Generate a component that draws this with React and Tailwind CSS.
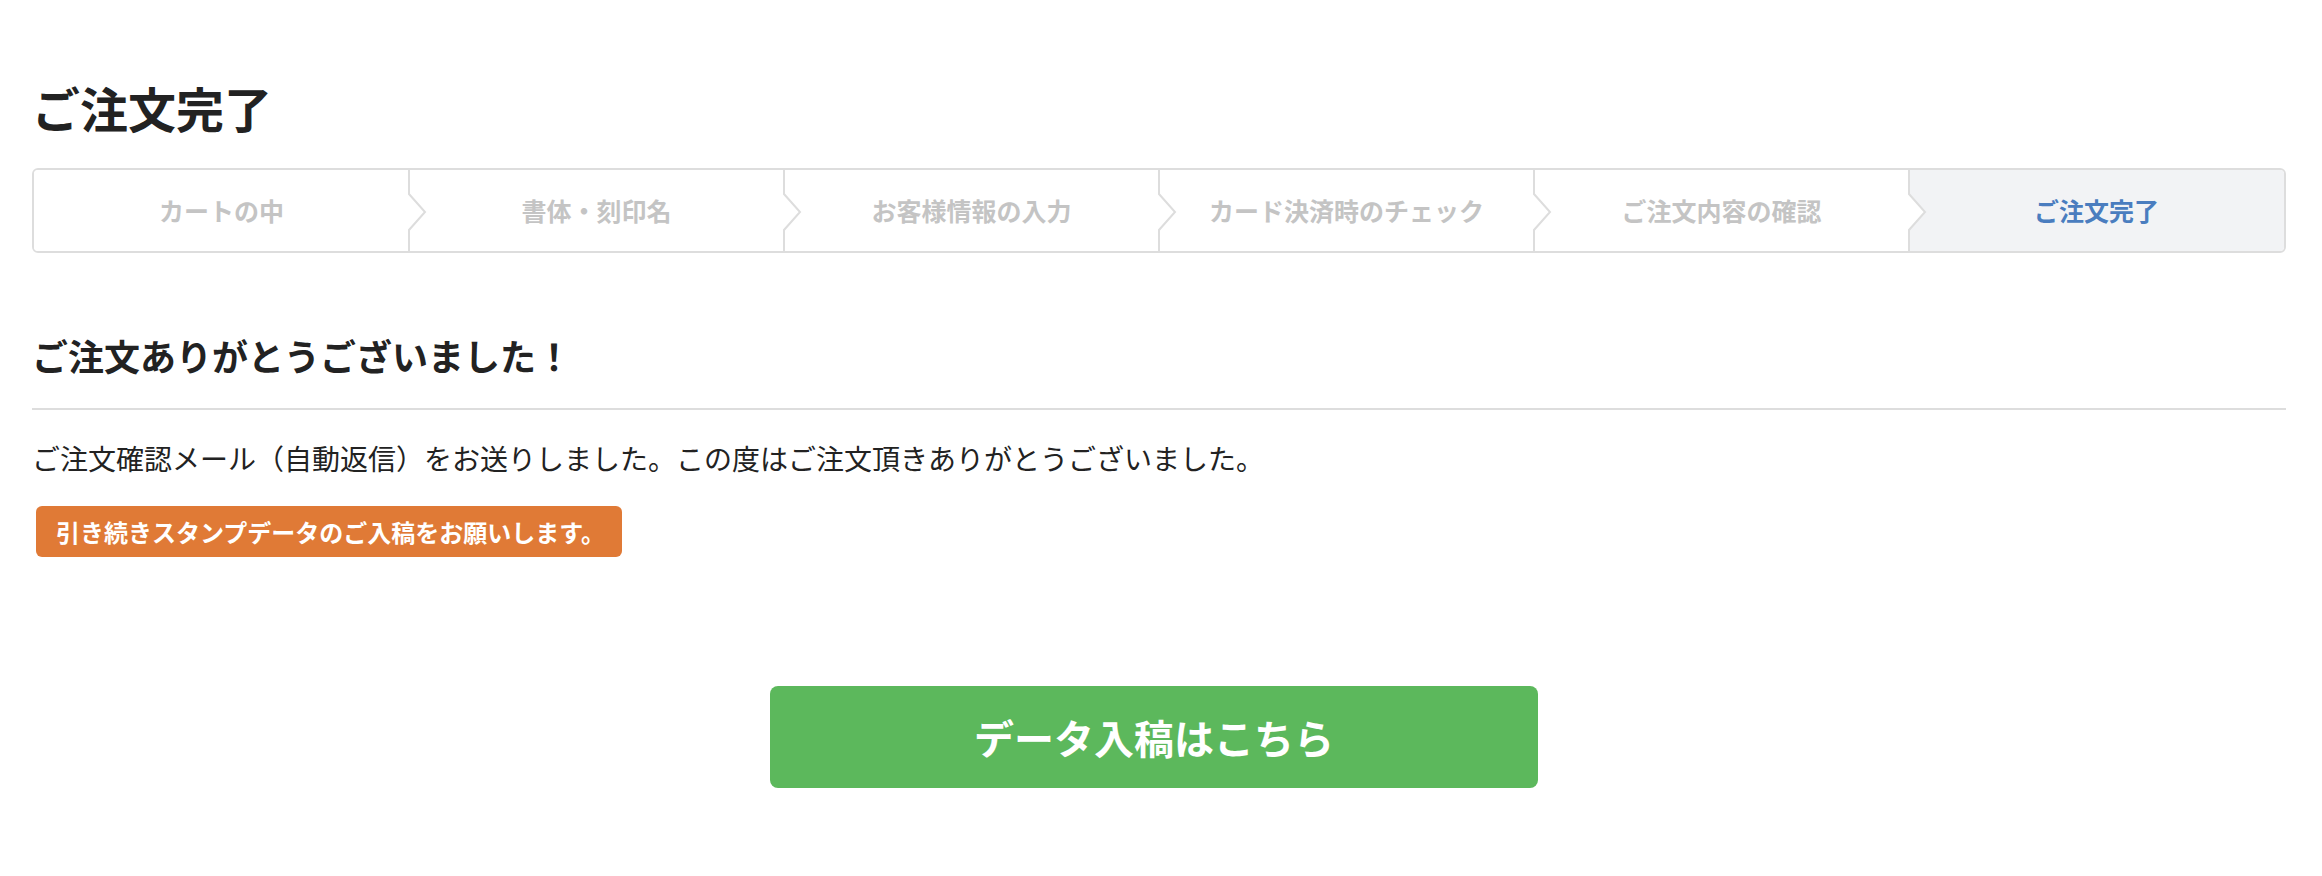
import React from 'react';

// 注文フローのステップ
const steps = [
  'カートの中',
  '書体・刻印名',
  'お客様情報の入力',
  'カード決済時のチェック',
  'ご注文内容の確認',
  'ご注文完了',
];

// ステップ間の山形の区切り線
const Chevron = () => (
  <svg
    className="absolute top-0 right-[-19px] z-10 h-[81px] w-[20px]"
    viewBox="0 0 20 81"
    fill="none"
  >
    <polygon points="1,24 17,42 1,60" fill="#ffffff" />
    <polyline points="1,0 1,24 17,42 1,60 1,81" stroke="#dddddd" strokeWidth="2" fill="none" />
  </svg>
);

const StepBar = ({ current }) => (
  <div className="mt-[33px] flex h-[85px] overflow-hidden rounded-[6px] border-2 border-[#dddddd]">
    {steps.map((label, i) => {
      const active = i === current;
      return (
        <div
          key={label}
          className={`relative flex flex-1 items-center justify-center ${
            active ? 'bg-[#f2f3f5] text-[#4a7dbf]' : 'bg-white text-[#c4c4c4]'
          }`}
        >
          <span className="text-[25px] font-bold leading-none">{label}</span>
          {i < steps.length - 1 && <Chevron />}
        </div>
      );
    })}
  </div>
);

export default function App() {
  return (
    <div className="min-h-[876px] bg-white pl-[32px] pr-[36px] pt-[79px] font-['Noto_Sans_CJK_JP',sans-serif] text-[#222222]">
      <h1 className="text-[48px] font-bold leading-[56px]">ご注文完了</h1>

      <StepBar current={5} />

      <h2 className="mt-[78px] text-[36px] font-bold leading-[48px]">ご注文ありがとうございました！</h2>

      <hr className="mt-[29px] border-0 border-t-2 border-[#dddddd]" />

      <p className="mt-[28px] text-[28px] leading-[40px]">
        ご注文確認メール（自動返信）をお送りしました。この度はご注文頂きありがとうございました。
      </p>

      <div className="mt-[28px] ml-[4px] inline-flex h-[51px] items-center rounded-[6px] bg-[#e07a36] pl-[20px] pr-[17px]">
        <span className="text-[24px] font-bold leading-none text-white">
          引き続きスタンプデータのご入稿をお願いします。
        </span>
      </div>

      <div className="mt-[129px]">
        <button
          type="button"
          className="ml-[738px] flex h-[102px] w-[768px] items-center justify-center rounded-[8px] bg-[#5cb85c] text-[40px] font-bold leading-none text-white"
        >
          データ入稿はこちら
        </button>
      </div>
    </div>
  );
}
